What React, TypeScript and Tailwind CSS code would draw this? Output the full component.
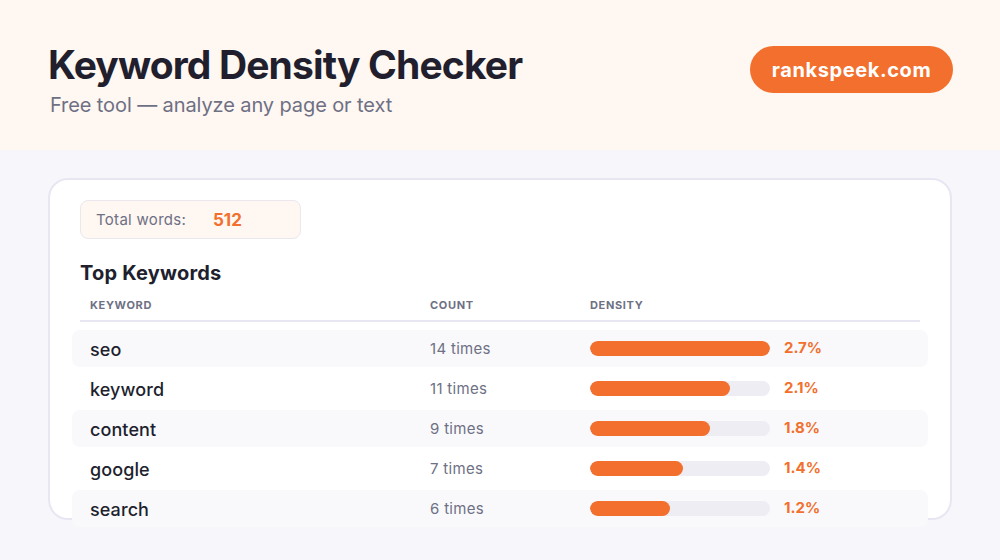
const KEYWORDS = [
  { word: "seo", count: 14, density: 2.7 },
  { word: "keyword", count: 11, density: 2.1 },
  { word: "content", count: 9, density: 1.8 },
  { word: "google", count: 7, density: 1.4 },
  { word: "search", count: 6, density: 1.2 },
];

const MAX_DENSITY = 2.7;

export default function App() {
  return (
    <div className="w-[1000px] h-[560px] overflow-hidden bg-[#f7f7fb] font-['Inter','Liberation_Sans',sans-serif]">
      {/* Header */}
      <div className="h-[150px] bg-[#fff7f2] flex items-start justify-between pl-12 pr-[47px] pt-[42px]">
        <div>
          <h1 className="text-[39px] leading-[46px] font-bold tracking-[-0.022em] text-[#211f2e]">
            Keyword Density Checker
          </h1>
          <p className="mt-[5px] ml-[2px] text-[20px] leading-[24px] tracking-[-0.005em] text-[#6e7084]">
            Free tool — analyze any page or text
          </p>
        </div>
        <div className="mt-1 h-[47px] w-[203px] rounded-full bg-[#f26f2d] flex items-center justify-center text-[20px] font-bold tracking-[0.03em] text-white">
          rankspeek.com
        </div>
      </div>

      {/* Card */}
      <div className="mx-12 mt-7 h-[342px] rounded-[20px] border-2 border-[#e8e6f2] bg-white pl-[30px] pr-[30px] pt-5">
        <div className="h-[39px] w-[221px] rounded-lg border border-[#ebe7ef] bg-[#fff7f2] flex items-center pl-[15px] pt-[2px]">
          <span className="w-[117px] text-[15px] tracking-[0.02em] text-[#6e7084]">Total words:</span>
          <span className="text-[17px] font-bold text-[#f26f2d]">512</span>
        </div>

        <h2 className="mt-[22px] text-[20px] leading-6 font-bold tracking-[0.01em] text-[#211f2e]">Top Keywords</h2>

        <div className="mt-[12px] grid grid-cols-[340px_160px_1fr] pl-[10px] pb-[7px] border-b-2 border-[#e8e6f2] text-[11px] leading-4 font-bold tracking-[0.06em] text-[#6e7084]">
          <span>KEYWORD</span>
          <span>COUNT</span>
          <span>DENSITY</span>
        </div>

        <div className="-mx-2 mt-2 flex flex-col gap-[3px]">
          {KEYWORDS.map((k, i) => (
            <div
              key={k.word}
              className={`h-[37px] shrink-0 rounded-lg grid grid-cols-[340px_160px_1fr] items-center pl-[18px] pt-[2px] ${
                i % 2 === 0 ? "bg-[#f9f9fc]" : ""
              }`}
            >
              <span className="text-[18px] font-medium tracking-[0.005em] text-[#211f2e]">{k.word}</span>
              <span className="text-[15px] tracking-[0.02em] text-[#6e7084]">{k.count} times</span>
              <div className="flex items-center gap-[14px] -mt-[2px]">
                <div className="h-[15px] w-[180px] rounded-full bg-[#ededf3] overflow-hidden">
                  <div
                    className="h-full rounded-full bg-[#f26f2d]"
                    style={{ width: `${(k.density / MAX_DENSITY) * 100}%` }}
                  />
                </div>
                <span className="text-[15px] font-bold text-[#f26f2d]">{k.density}%</span>
              </div>
            </div>
          ))}
        </div>
      </div>
    </div>
  );
}
